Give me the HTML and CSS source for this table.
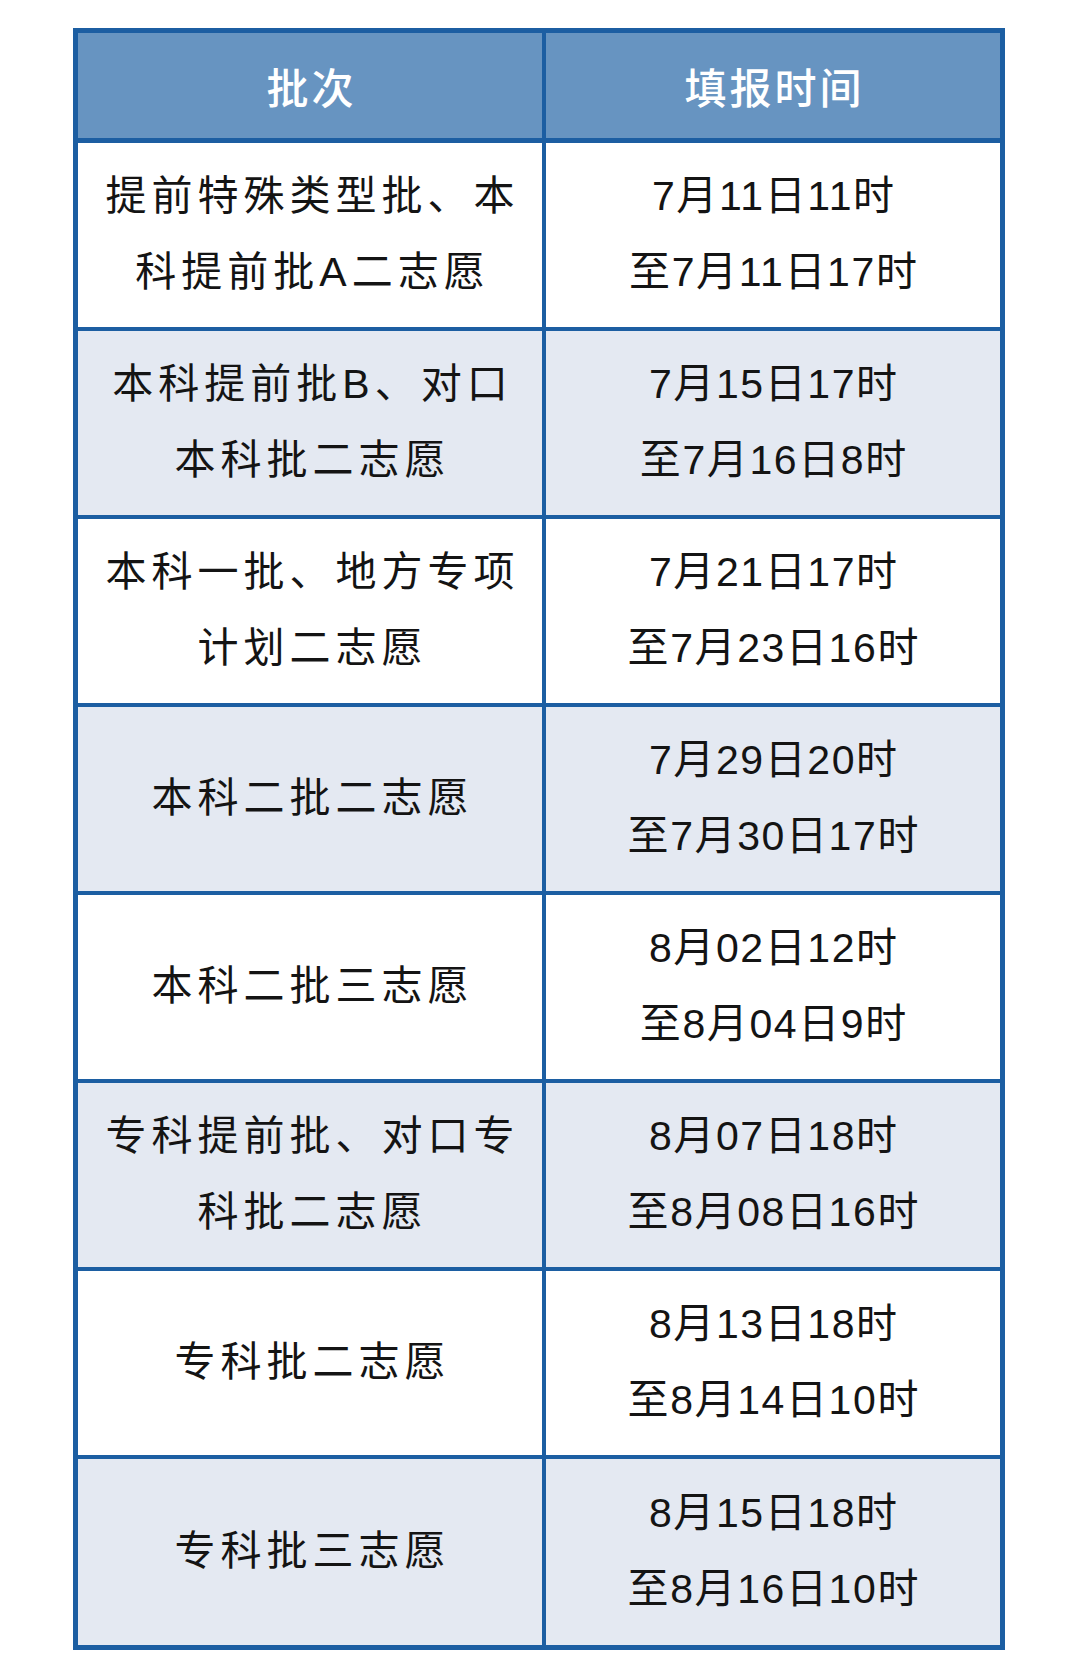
FILE: index.html
```html
<!DOCTYPE html>
<html lang="zh-CN">
<head>
<meta charset="utf-8">
<title>志愿填报时间</title>
<link rel="stylesheet" href="styles.css">
</head>
<body>
<div class="sheet">
  <div class="grid">
    <div class="cell head left">批次</div>
    <div class="cell head">填报时间</div>

    <div class="cell left">提前特殊类型批、本<br>科提前批A二志愿</div>
    <div class="cell time">7月11日11时<br>至7月11日17时</div>

    <div class="cell left alt">本科提前批B、对口<br>本科批二志愿</div>
    <div class="cell time alt">7月15日17时<br>至7月16日8时</div>

    <div class="cell left">本科一批、地方专项<br>计划二志愿</div>
    <div class="cell time">7月21日17时<br>至7月23日16时</div>

    <div class="cell left alt">本科二批二志愿</div>
    <div class="cell time alt">7月29日20时<br>至7月30日17时</div>

    <div class="cell left">本科二批三志愿</div>
    <div class="cell time">8月02日12时<br>至8月04日9时</div>

    <div class="cell left alt">专科提前批、对口专<br>科批二志愿</div>
    <div class="cell time alt">8月07日18时<br>至8月08日16时</div>

    <div class="cell left">专科批二志愿</div>
    <div class="cell time">8月13日18时<br>至8月14日10时</div>

    <div class="cell left alt last">专科批三志愿</div>
    <div class="cell time alt last">8月15日18时<br>至8月16日10时</div>
  </div>
</div>
</body>
</html>
```

FILE: styles.css
```css
html, body {
  margin: 0;
  padding: 0;
  background: #ffffff;
}

body {
  font-family: "Liberation Sans", "Noto Sans CJK SC", sans-serif;
  color: #141414;
}

.sheet {
  padding: 28px 0 0 73px;
}

.grid {
  width: 932px;
  box-sizing: border-box;
  border: 5px solid #1c5ea2;
  display: grid;
  grid-template-columns: 468px 1fr;
  background: #ffffff;
}

.cell {
  box-sizing: border-box;
  height: 188px;
  border-bottom: 4px solid #1c5ea2;
  display: flex;
  align-items: center;
  justify-content: center;
  text-align: center;
  font-size: 41px;
  line-height: 76px;
  letter-spacing: 5px;
  padding-left: 5px;
  padding-bottom: 3px;
  background: #ffffff;
}

.cell.left {
  border-right: 4px solid #1c5ea2;
}

.cell.time {
  letter-spacing: 1.6px;
  padding-left: 1.6px;
}

.cell.alt {
  background: #e4e9f2;
}

.cell.last {
  border-bottom: none;
  height: 186px;
}

.cell.head {
  height: 110px;
  border-bottom-width: 5px;
  background: #6794c1;
  color: #ffffff;
  font-family: "Noto Sans CJK SC", sans-serif;
  font-size: 42px;
  font-weight: 500;
  letter-spacing: 3px;
  padding-left: 3px;
  padding-bottom: 0;
}
```
